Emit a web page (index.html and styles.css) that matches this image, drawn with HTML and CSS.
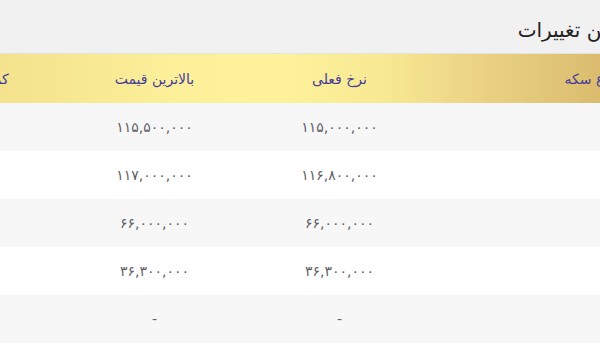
FILE: index.html
```html
<!DOCTYPE html>
<html lang="fa" dir="rtl">
<head>
<meta charset="utf-8">
<link rel="stylesheet" href="styles.css">
</head>
<body>
<div class="page">
  <h2 class="title">بیشترین تغییرات</h2>
  <table class="rates">
    <colgroup>
      <col class="c-name"><col class="c-num"><col class="c-num"><col class="c-num">
    </colgroup>
    <thead>
      <tr>
        <th>نوع سکه</th>
        <th>نرخ فعلی</th>
        <th>بالاترین قیمت</th>
        <th>کمترین قیمت</th>
      </tr>
    </thead>
    <tbody>
      <tr><td></td><td>۱۱۵,۰۰۰,۰۰۰</td><td>۱۱۵,۵۰۰,۰۰۰</td><td>۱۱۴,۵۰۰,۰۰۰</td></tr>
      <tr><td></td><td>۱۱۶,۸۰۰,۰۰۰</td><td>۱۱۷,۰۰۰,۰۰۰</td><td>۱۱۶,۵۰۰,۰۰۰</td></tr>
      <tr><td></td><td>۶۶,۰۰۰,۰۰۰</td><td>۶۶,۰۰۰,۰۰۰</td><td>۶۵,۸۰۰,۰۰۰</td></tr>
      <tr><td></td><td>۳۶,۳۰۰,۰۰۰</td><td>۳۶,۳۰۰,۰۰۰</td><td>۳۶,۰۰۰,۰۰۰</td></tr>
      <tr><td></td><td>-</td><td>-</td><td>-</td></tr>
    </tbody>
  </table>
</div>
</body>
</html>
```

FILE: styles.css
```css
html, body {
  margin: 0;
  padding: 0;
  overflow: hidden;
  background: #f7f7f7;
}
body {
  width: 600px;
  height: 343px;
  font-family: "DejaVu Sans", "Noto Sans", sans-serif;
}
.page {
  width: 871px;
  margin-right: -148px;
  direction: rtl;
}
.title {
  margin: 0;
  height: 54px;
  box-sizing: border-box;
  padding: 15px 94px 0 0;
  background: #f1f1f1;
  border-bottom: 1px solid #e2e2e2;
  font-size: 20px;
  font-weight: normal;
  line-height: 30px;
  color: #222;
}
.rates {
  width: 871px;
  border-collapse: collapse;
  table-layout: fixed;
}
.c-name { width: 316px; }
.c-num { width: 185px; }
.rates th {
  height: 49px;
  padding: 0;
  font-size: 14px;
  font-weight: normal;
  color: #463c9a;
  text-align: center;
}
.rates thead tr {
  background: linear-gradient(to left, #d8b86c 0%, #dbbc6f 17%, #ebd383 31%, #f8e994 42%, #fdf29b 54%, #fcf09a 65%, #f4e28d 86%, #f0dd88 100%);
}
.rates td {
  height: 48px;
  padding: 0;
  text-align: center;
  font-size: 14px;
  color: #5f5f66;
}
.rates td:last-child {
  padding-right: 20px;
}
.rates tbody tr:nth-child(odd) { background: #f7f7f7; }
.rates tbody tr:nth-child(even) { background: #ffffff; }
```
